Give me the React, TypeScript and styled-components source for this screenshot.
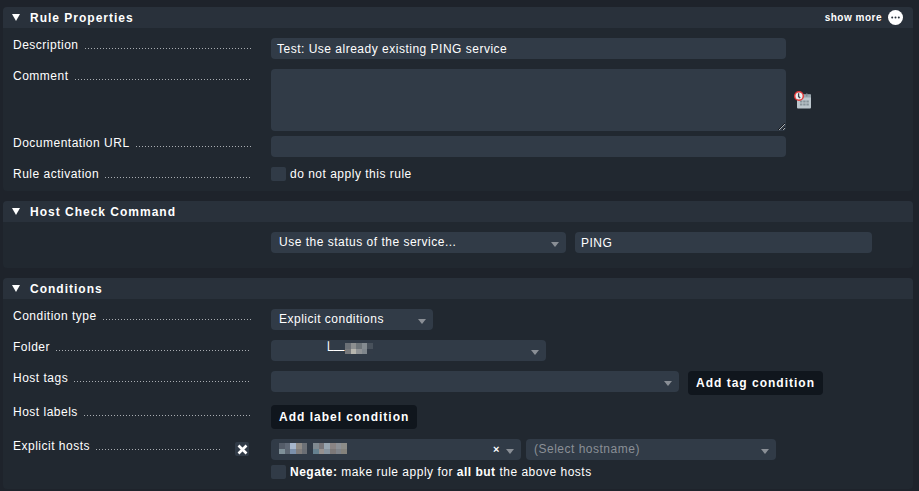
import React from "react";
import styled, { createGlobalStyle } from "styled-components";

const Global = createGlobalStyle`
  html, body { margin: 0; padding: 0; background: #1e232b; }
  body { font-family: "Liberation Sans", Arial, sans-serif; font-size: 12px; color: #fff; overflow: hidden; }
  * { box-sizing: border-box; }
`;

const Page = styled.div`
  display: flex;
  flex-direction: column;
  gap: 10px;
  width: 919px;
  height: 491px;
  padding: 7px 6px 0 3px;
`;
const Section = styled.section`
  background: #212830;
  border-radius: 4px;
`;
const Header = styled.header`
  display: flex;
  align-items: center;
  height: 21px;
  padding: 0 10px 0 9px;
  background: #29313b;
  border-radius: 4px 4px 0 0;
`;
const Triangle = styled.span`
  width: 0;
  height: 0;
  margin-right: 10px;
  border-left: 4px solid transparent;
  border-right: 4px solid transparent;
  border-top: 7px solid #fff;
`;
const Title = styled.h2`
  margin: 0;
  font-size: 12px;
  line-height: 14px;
  font-weight: 700;
  letter-spacing: 1px;
`;
const ShowMore = styled.div`
  display: flex;
  align-items: center;
  gap: 6px;
  margin-left: auto;
  font-size: 10px;
  font-weight: 700;
  letter-spacing: 0.5px;
`;
const Body = styled.div<{ $bottom: number }>`
  display: flex;
  flex-direction: column;
  padding: 10px 0 ${(p) => p.$bottom}px 10px;
`;
const Row = styled.div<{ $after?: number }>`
  display: grid;
  grid-template-columns: 258px 1fr;
  margin-bottom: ${(p) => p.$after ?? 10}px;
  &:last-child { margin-bottom: 0; }
`;
const Label = styled.div<{ $inset?: number }>`
  display: flex;
  align-items: flex-start;
  gap: 6px;
  padding-right: ${(p) => p.$inset ?? 20}px;
  line-height: 14px;
  letter-spacing: 0.5px;
`;
const Dots = styled.span`
  flex: 1;
  height: 1px;
  margin-top: 10px;
  background: repeating-linear-gradient(to right, #a9adb2 0 1px, transparent 1px 3px);
`;
const Controls = styled.div`
  display: flex;
  align-items: flex-start;
`;
const Field = styled.div<{ $width: number; $muted?: boolean }>`
  display: flex;
  align-items: center;
  width: ${(p) => p.$width}px;
  height: 21px;
  padding: 0 6px;
  background: #313b47;
  border-radius: 4px;
  letter-spacing: 0.5px;
  color: ${(p) => (p.$muted ? "#8a8f96" : "#fff")};
`;
const Area = styled.textarea`
  display: block;
  width: 515px;
  height: 62px;
  margin: 0;
  padding: 4px 6px;
  background: #313b47;
  border: 0;
  border-radius: 4px;
  outline: 0;
  color: #fff;
  color-scheme: dark;
`;
const Select = styled(Field)`
  position: relative;
  padding: 0 8px 2px;
`;
const Arrow = styled.span`
  position: absolute;
  right: 7px;
  top: 10px;
  width: 0;
  height: 0;
  border-left: 4px solid transparent;
  border-right: 4px solid transparent;
  border-top: 5px solid #8a8f96;
`;
const ClearMark = styled.span`
  position: absolute;
  right: 21px;
  top: 3px;
  font-size: 11px;
  line-height: 14px;
  font-weight: 700;
`;
const Gap = styled.span<{ $w: number }>`
  flex: none;
  width: ${(p) => p.$w}px;
`;
const Button = styled.button`
  height: 24px;
  padding: 0 8px;
  border: 0;
  border-radius: 4px;
  background: #10161d;
  color: #fff;
  font: 700 12px "Liberation Sans", Arial, sans-serif;
  letter-spacing: 1px;
`;
const CheckRow = styled.label`
  display: flex;
  align-items: center;
  gap: 4px;
  height: 14px;
  letter-spacing: 0.5px;
  b { font-weight: 700; }
`;
const Box = styled.span`
  flex: none;
  width: 15px;
  height: 14px;
  background: #313b47;
  border-radius: 2px;
`;
const Stack = styled.div`
  display: flex;
  flex-direction: column;
  gap: 5px;
`;
const RemoveBtn = styled.span`
  display: flex;
  flex: none;
  align-items: center;
  justify-content: center;
  width: 14px;
  height: 14px;
  margin: 3px 0 0 8px;
  background: #313b47;
  border-radius: 2px;
`;
const TreePrefix = styled.span`
  margin-left: 44px;
  font-size: 15px;
  line-height: 14px;
  letter-spacing: 0;
`;
const FolderName = styled.span`
  display: flex;
  margin: 0 0 2px 1px;
`;
const IconSlot = styled.span`
  display: flex;
  margin: 21px 0 0 7px;
`;

const MoreIcon = () => (
  <svg width="15" height="15" viewBox="0 0 15 15">
    <circle cx="7.5" cy="7.5" r="7.5" fill="#fff" />
    <circle cx="4.2" cy="7.5" r="1" fill="#29313b" />
    <circle cx="7.5" cy="7.5" r="1" fill="#29313b" />
    <circle cx="10.8" cy="7.5" r="1" fill="#29313b" />
  </svg>
);

const CalendarIcon = () => (
  <svg width="19" height="19" viewBox="0 0 19 19">
    <rect x="4" y="4.5" width="14" height="14" rx="1" fill="#bcc6cc" />
    <rect x="4" y="4.5" width="14" height="3" fill="#98a4ab" />
    <rect x="13" y="3.5" width="1.5" height="3" fill="#7f8b92" />
    <g fill="#87939a">
      <rect x="7" y="10.5" width="2.4" height="2" />
      <rect x="10.2" y="10.5" width="2.4" height="2" />
      <rect x="13.4" y="10.5" width="2.4" height="2" />
      <rect x="7" y="13.5" width="2.4" height="2" />
      <rect x="10.2" y="13.5" width="2.4" height="2" />
      <rect x="13.4" y="13.5" width="2.4" height="2" />
    </g>
    <circle cx="6" cy="6" r="4.3" fill="#eceff1" stroke="#e03a3a" strokeWidth="1.5" />
    <path d="M5.6 3.2V6.6L7.2 8" fill="none" stroke="#39424a" strokeWidth="1.3" />
  </svg>
);

const CloseIcon = () => (
  <svg width="11" height="11" viewBox="0 0 11 11">
    <path d="M1.5 1.5L9.5 9.5M9.5 1.5L1.5 9.5" stroke="#fff" strokeWidth="2.6" />
  </svg>
);

const Pixelated = ({ cells, w, h }: { cells: string[][]; w: number; h: number }) => (
  <svg width={cells[0].length * w} height={cells.length * h} shapeRendering="crispEdges">
    {cells.map((row, y) =>
      row.map((fill, x) => <rect key={`${x}-${y}`} x={x * w} y={y * h} width={w} height={h} fill={fill} />)
    )}
  </svg>
);

const folderBlur = [
  ["#6b7076", "#8c8f90", "#6d7479", "#848b90", "#48515b"],
  ["#77797c", "#b6b5ae", "#8f9295", "#7f868c", "#323b47"],
];
const hostBlur = [
  ["#545c68", "#5f6875", "#a6b6cc", "#8f8b86", "#6c7177", "#313b47", "#7f8990", "#777579", "#97a5b0", "#8a8484", "#8c9096", "#8c8c88"],
  ["#7f9098", "#5d6672", "#7c90aa", "#807d7c", "#6a6e74", "#313b47", "#66818f", "#95908e", "#86939e", "#7c7878", "#7f8389", "#84827c"],
];

export default function App() {
  return (
    <Page>
      <Global />
      <Section>
        <Header>
          <Triangle />
          <Title>Rule Properties</Title>
          <ShowMore>
            show more
            <MoreIcon />
          </ShowMore>
        </Header>
        <Body $bottom={10}>
          <Row>
            <Label $inset={20}>Description<Dots /></Label>
            <Field $width={515}>Test: Use already existing PING service</Field>
          </Row>
          <Row $after={5}>
            <Label $inset={21}>Comment<Dots /></Label>
            <Controls>
              <Area />
              <IconSlot><CalendarIcon /></IconSlot>
            </Controls>
          </Row>
          <Row>
            <Label $inset={20}>Documentation URL<Dots /></Label>
            <Field $width={515} />
          </Row>
          <Row>
            <Label $inset={21}>Rule activation<Dots /></Label>
            <CheckRow><Box />do not apply this rule</CheckRow>
          </Row>
        </Body>
      </Section>

      <Section>
        <Header>
          <Triangle />
          <Title>Host Check Command</Title>
        </Header>
        <Body $bottom={15}>
          <Row>
            <span />
            <Controls>
              <Select $width={295}>Use the status of the service...<Arrow /></Select>
              <Gap $w={9} />
              <Field $width={297}>PING</Field>
            </Controls>
          </Row>
        </Body>
      </Section>

      <Section>
        <Header>
          <Triangle />
          <Title>Conditions</Title>
        </Header>
        <Body $bottom={10}>
          <Row>
            <Label $inset={20}>Condition type<Dots /></Label>
            <Select $width={162}>Explicit conditions<Arrow /></Select>
          </Row>
          <Row>
            <Label $inset={20}>Folder<Dots /></Label>
            <Select $width={275}>
              <TreePrefix>└─</TreePrefix>
              <FolderName><Pixelated cells={folderBlur} w={5.6} h={5.5} /></FolderName>
              <Arrow />
            </Select>
          </Row>
          <Row>
            <Label $inset={20}>Host tags<Dots /></Label>
            <Controls>
              <Select $width={408}><Arrow /></Select>
              <Gap $w={9} />
              <Button>Add tag condition</Button>
            </Controls>
          </Row>
          <Row>
            <Label $inset={20}>Host labels<Dots /></Label>
            <Controls>
              <Button>Add label condition</Button>
            </Controls>
          </Row>
          <Row>
            <Label $inset={22}>
              Explicit hosts<Dots />
              <RemoveBtn><CloseIcon /></RemoveBtn>
            </Label>
            <Stack>
              <Controls>
                <Select $width={250}>
                  <Pixelated cells={hostBlur} w={5.67} h={5.5} />
                  <ClearMark>×</ClearMark>
                  <Arrow />
                </Select>
                <Gap $w={5} />
                <Select $width={250} $muted>(Select hostname)<Arrow /></Select>
              </Controls>
              <CheckRow><Box /><span><b>Negate:</b> make rule apply for <b>all but</b> the above hosts</span></CheckRow>
            </Stack>
          </Row>
        </Body>
      </Section>
    </Page>
  );
}
